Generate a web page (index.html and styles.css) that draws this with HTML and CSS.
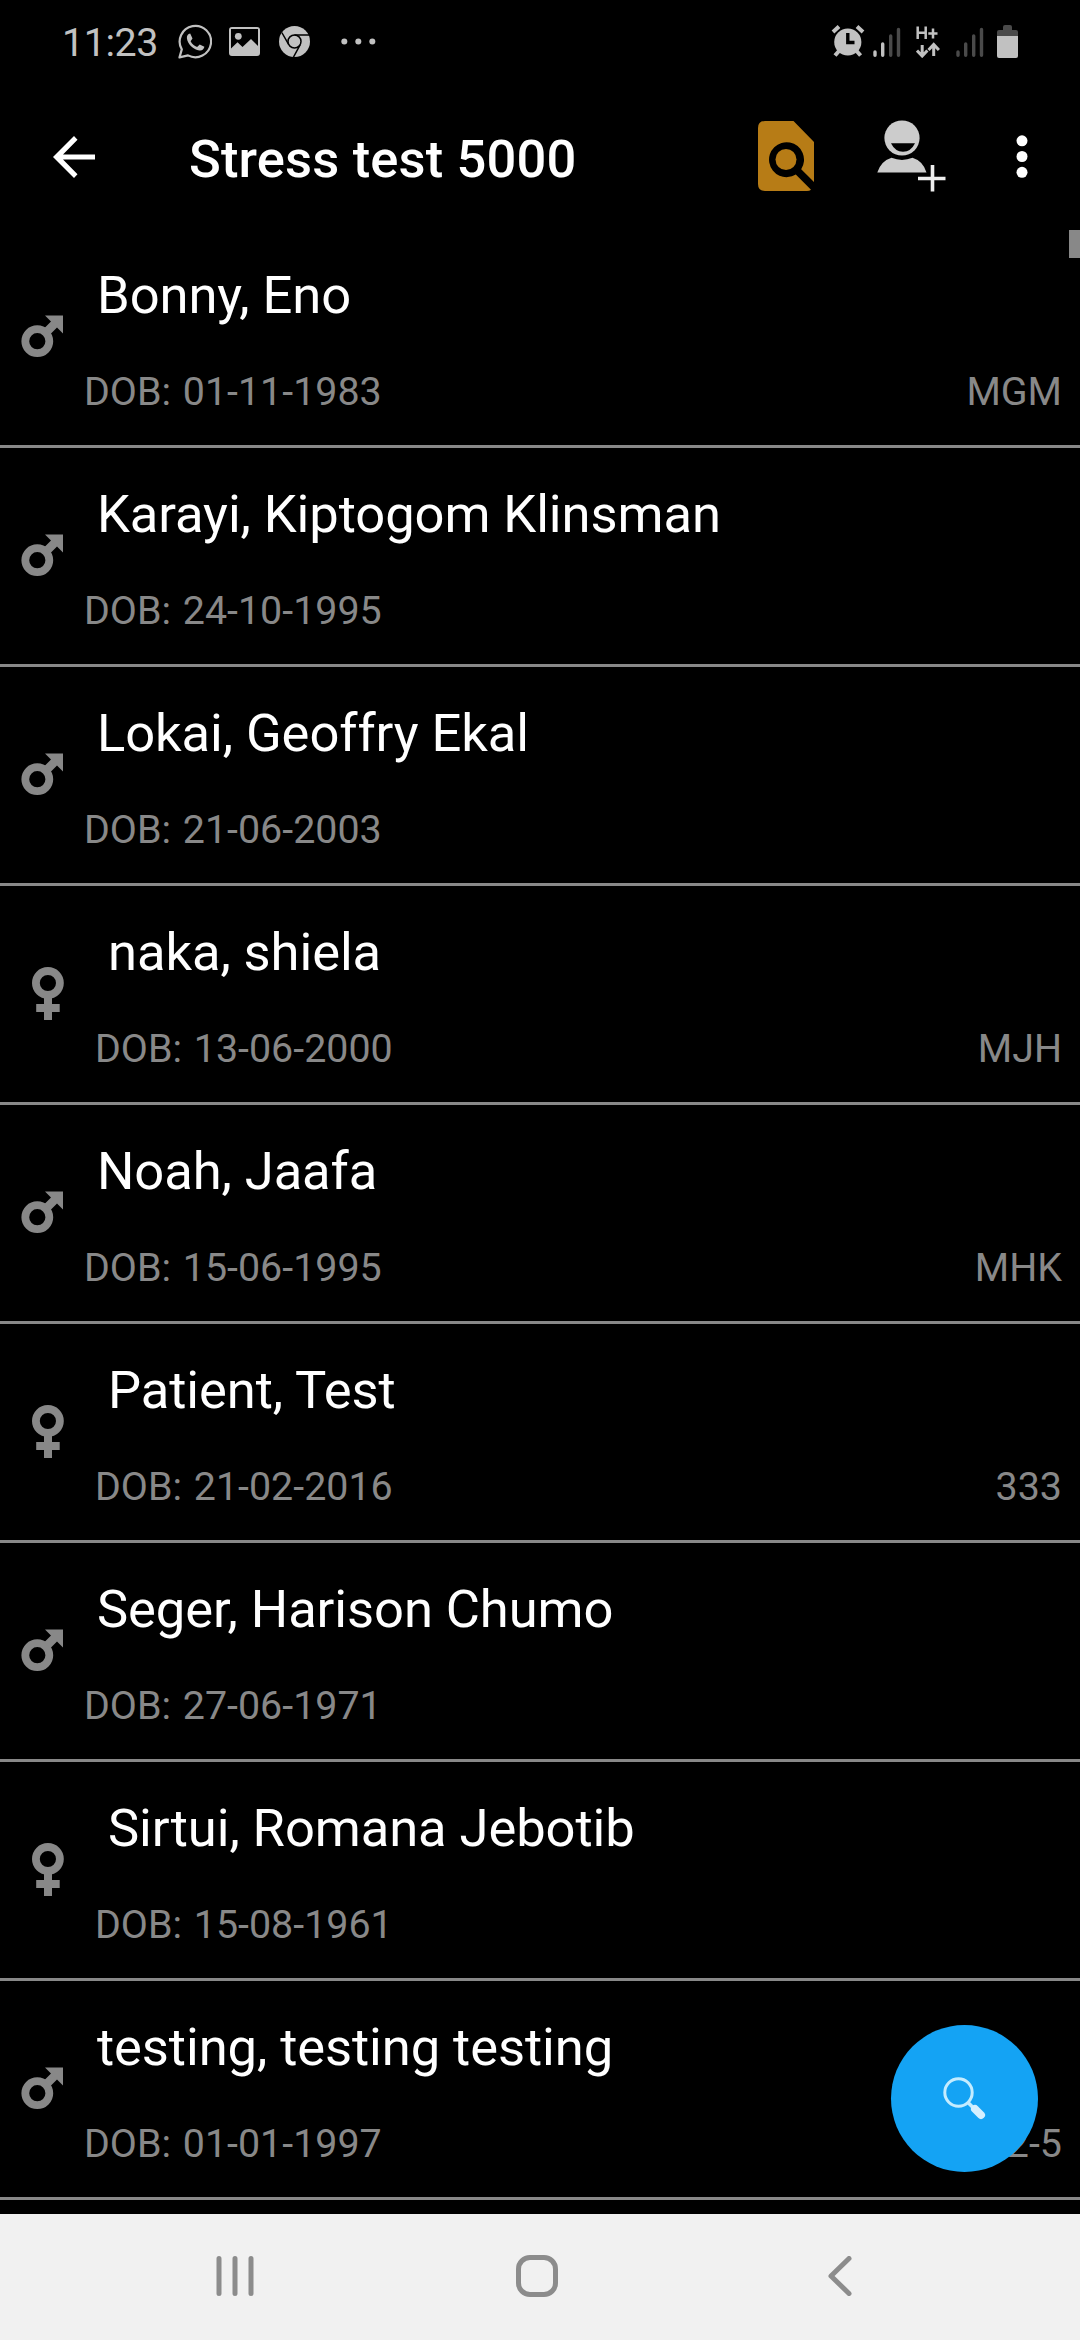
FILE: index.html
```html
<!DOCTYPE html>
<html lang="en">
<head>
<meta charset="utf-8">
<title>Stress test 5000</title>
<link rel="stylesheet" href="styles.css">
</head>
<body>
<svg class="defs" aria-hidden="true">
  <symbol id="male" viewBox="0 0 43 43">
    <circle cx="16.3" cy="26.2" r="12" fill="none" stroke="currentColor" stroke-width="7.8"/>
    <path d="M24 0.5H42V18.5L36 12.5L29 19.5L23 13.5L30 6.5Z" fill="currentColor"/>
  </symbol>
  <symbol id="female" viewBox="0 0 32 53">
    <circle cx="15.9" cy="16" r="12" fill="none" stroke="currentColor" stroke-width="7.8"/>
    <path d="M12 29H20V37H27.7V45H20V53H12V45H4.2V37H12Z" fill="currentColor"/>
  </symbol>
</svg>

<div class="status-bar">
  <span class="clock">11:23</span>
  <svg class="whatsapp" width="34" height="35" viewBox="0 0 34 35">
    <path d="M1.5 33.4L3.8 25.4A15.7 15.7 0 1 1 10 31.4Z" fill="none" stroke="currentColor" stroke-width="2.2" stroke-linejoin="round"/>
    <path d="M12.2 9.4L14.5 14.4L12.6 17.2C14 20 16.3 22 19.1 23L21.7 20.4L26.4 22.8C25.8 25.4 24 26.8 21.4 26.4C15.3 25.5 9.6 20 8.9 14.2C8.7 11.6 10 9.7 12.2 9.4Z" fill="currentColor"/>
  </svg>
  <svg class="picture" width="31" height="29" viewBox="0 0 31 29">
    <path fill-rule="evenodd" d="M3 0H28Q31 0 31 3V26Q31 29 28 29H3Q0 29 0 26V3Q0 0 3 0ZM2 2V21.5L8.5 15.2L13.5 20L22 12L29 19V2Z" fill="currentColor"/>
    <circle cx="9.3" cy="9.3" r="3.4" fill="currentColor"/>
  </svg>
  <svg class="chrome" width="31" height="31" viewBox="0 0 31 31">
    <circle cx="15.5" cy="15.5" r="15.5" fill="currentColor"/>
    <g fill="none" stroke="#000" stroke-width="1.5">
      <circle cx="15.5" cy="15.5" r="6.5"/>
      <path d="M15.5 9H30M9.9 18.8L2.8 6.5M21.1 18.8L14.5 31"/>
    </g>
  </svg>
  <svg class="more-notices" width="35" height="7" viewBox="0 0 35 7" fill="currentColor">
    <circle cx="3.3" cy="3.5" r="3"/><circle cx="17.3" cy="3.5" r="3"/><circle cx="31.3" cy="3.5" r="3"/>
  </svg>
  <svg class="alarm" width="34" height="32" viewBox="0 0 34 32">
    <circle cx="16.8" cy="17" r="13.6" fill="currentColor"/>
    <path d="M2 7L8 1.5M26 1.5L32 7M8 26L4 30.5M25.6 26L29.6 30.5" stroke="currentColor" stroke-width="4" fill="none"/>
    <path d="M16.8 8V17.5H23.5" fill="none" stroke="#000" stroke-width="3.4"/>
  </svg>
  <svg class="signal-a" width="28" height="31" viewBox="0 0 28 31" stroke-width="3.4" stroke-linecap="round">
    <path d="M2 25V28.3M9.7 17V28.3" stroke="#c1c1c1"/><path d="M17.7 9V28.3M25.5 2.5V28.3" stroke="#4a4a4a"/>
  </svg>
  <svg class="hplus" width="24" height="32" viewBox="0 0 24 32" fill="none" stroke="currentColor">
    <path d="M1.7 .5V13M9.7 .5V13M1.7 6.7H9.7M17 2.5V12.5M12.3 7.5H21.5" stroke-width="2.5"/>
    <path d="M6.2 19V30M1 24.5L6.2 30L11.4 24.5M17.7 30V19M12.5 24L17.7 18.5L22.9 24" stroke-width="3"/>
  </svg>
  <svg class="signal-b" width="28" height="31" viewBox="0 0 28 31" stroke="#4a4a4a" stroke-width="3.4" stroke-linecap="round">
    <path d="M2 25V28.3M9.7 17V28.3M17.7 9V28.3M25.5 2.5V28.3"/>
  </svg>
  <svg class="battery" width="21" height="33" viewBox="0 0 21 33">
    <path d="M0 11V7Q0 5 2 5H6V2Q6 0 8 0H13Q15 0 15 2V5H19Q21 5 21 7V11Z" fill="#4a4a4a"/>
    <path d="M0 11H21V31Q21 33 19 33H2Q0 33 0 31Z" fill="currentColor"/>
  </svg>
</div>

<header class="toolbar">
  <svg class="back" width="42" height="42" viewBox="0 0 42 42"><path d="M42 18.4V23.6H10L24.5 38.3L21 42L0 21L21 0L24.5 3.7L10 18.4Z" fill="#fff"/></svg>
  <h1 class="title">Stress test 5000</h1>
  <svg class="find" width="56" height="70" viewBox="0 0 56 70">
    <path d="M7 0H35.5L56 21V61L43.2 48.2A17.5 17.5 0 1 0 37.8 53.5L53 68.7Q51.5 70 49 70H7Q0 70 0 63V7Q0 0 7 0Z" fill="#b77c16"/>
    <circle cx="28" cy="38.5" r="10.5" fill="#b77c16"/>
  </svg>
  <svg class="add-person" width="70" height="72" viewBox="0 0 70 72">
    <circle cx="25" cy="18" r="17.6" fill="#ccc"/>
    <path d="M14 23.3H38Q34 31.7 26 31.7T14 23.3Z" fill="#000"/>
    <path d="M.3 52.5Q4 41 14.5 37.8Q25 42 35.5 37.8Q46 41 49.5 52.5Z" fill="#ccc"/>
    <path d="M55.5 45V71.5M41 58.5H68.5" stroke="#eee" stroke-width="3.6"/>
  </svg>
  <svg class="overflow" width="12" height="43" viewBox="0 0 12 43" fill="#fff">
    <circle cx="6" cy="5.8" r="5.5"/><circle cx="6" cy="21.5" r="5.5"/><circle cx="6" cy="37.3" r="5.5"/>
  </svg>
</header>

<main class="list">
  <article class="row male"><svg class="sex"><use href="#male"/></svg><div class="info"><h2>Bonny, Eno</h2><p><span>DOB: 01-11-1983</span><span>MGM</span></p></div></article>
  <article class="row male"><svg class="sex"><use href="#male"/></svg><div class="info"><h2>Karayi, Kiptogom Klinsman</h2><p><span>DOB: 24-10-1995</span></p></div></article>
  <article class="row male"><svg class="sex"><use href="#male"/></svg><div class="info"><h2>Lokai, Geoffry Ekal</h2><p><span>DOB: 21-06-2003</span></p></div></article>
  <article class="row female"><svg class="sex"><use href="#female"/></svg><div class="info"><h2>naka, shiela</h2><p><span>DOB: 13-06-2000</span><span>MJH</span></p></div></article>
  <article class="row male"><svg class="sex"><use href="#male"/></svg><div class="info"><h2>Noah, Jaafa</h2><p><span>DOB: 15-06-1995</span><span>MHK</span></p></div></article>
  <article class="row female"><svg class="sex"><use href="#female"/></svg><div class="info"><h2>Patient, Test</h2><p><span>DOB: 21-02-2016</span><span>333</span></p></div></article>
  <article class="row male"><svg class="sex"><use href="#male"/></svg><div class="info"><h2>Seger, Harison Chumo</h2><p><span>DOB: 27-06-1971</span></p></div></article>
  <article class="row female"><svg class="sex"><use href="#female"/></svg><div class="info"><h2>Sirtui, Romana Jebotib</h2><p><span>DOB: 15-08-1961</span></p></div></article>
  <article class="row male"><svg class="sex"><use href="#male"/></svg><div class="info"><h2>testing, testing testing</h2><p><span>DOB: 01-01-1997</span><span>2-5</span></p></div></article>
  <div class="scroll-thumb"></div>
  <button class="fab" aria-label="Search">
    <svg width="44" height="44" viewBox="0 0 44 44">
      <circle cx="15.5" cy="15.5" r="13.7" fill="none" stroke="#c4ecff" stroke-width="3"/>
      <path d="M25 25.5L30 30.5" stroke="#c4ecff" stroke-width="3.5"/>
      <path d="M32 32L38 38" stroke="#d5efff" stroke-width="8" stroke-linecap="round"/>
    </svg>
  </button>
</main>

<nav class="nav-bar">
  <svg class="recents" width="38" height="40" viewBox="0 0 38 40"><path d="M3 2.5V37.5M19 2.5V37.5M35 2.5V37.5"/></svg>
  <svg class="home" width="42" height="42" viewBox="0 0 42 42"><rect x="2.5" y="2.5" width="37" height="37" rx="11.5"/></svg>
  <svg class="nav-back" width="24" height="40" viewBox="0 0 24 40"><path d="M21 2.5L3 20L21 37.5"/></svg>
</nav>
</body>
</html>
```
FILE: styles.css
```css
* { box-sizing: border-box; }
body {
  margin: 0;
  width: 1080px;
  height: 2340px;
  display: flex;
  flex-direction: column;
  background: #000;
  color: #fff;
  font-family: Roboto, sans-serif;
  overflow: hidden;
}
svg { display: block; flex: none; }
h1, h2, p { margin: 0; font-weight: 400; }
.defs { display: none; }

.status-bar {
  height: 84px;
  display: flex;
  align-items: flex-start;
  padding-left: 62px;
  color: #c1c1c1;
}
.clock { width: 115px; padding-top: 20px; font-size: 39.4px; line-height: 46px; letter-spacing: -.4px; }
.whatsapp { margin: 24px 0 0 1px; }
.picture { margin: 27px 0 0 17px; }
.chrome { margin: 26px 0 0 19px; }
.more-notices { margin: 38px auto 0 31px; }
.alarm { margin: 25px 8px 0 0; }
.signal-a { margin: 27px 15px 0 0; }
.hplus { margin: 26px 16px 0 0; }
.signal-b { margin: 27px 13px 0 0; }
.battery { margin: 25px 62px 0 0; }

.toolbar { height: 145px; display: flex; align-items: flex-start; padding-left: 53px; }
.back { margin-top: 52px; }
.title { margin: 44px auto 0 94px; font-size: 52.5px; line-height: 62px; font-weight: 500; letter-spacing: .16px; }
.find { margin: 37px 63px 0 0; }
.add-person { margin: 36px 69px 0 0; }
.overflow { margin: 51px 52px 0 0; }

.list { position: relative; flex: 1; overflow: hidden; }
.row {
  height: 219px;
  display: flex;
  border-bottom: 3px solid #888;
}
.sex { color: #888; }
.male .sex { width: 43px; height: 43px; margin: 86px 20px 0 21px; }
.female .sex { width: 32px; height: 53px; margin: 81px 31px 0 32px; }
.info { flex: 1; padding: 35px 18px 0 0; }
.info h2 { padding-left: 13px; font-size: 52.5px; line-height: 62px; letter-spacing: -.08px; }
.info p {
  display: flex;
  justify-content: space-between;
  margin-top: 43px;
  font-size: 39.4px;
  line-height: 46px;
  word-spacing: 2px;
  color: #888;
}
.scroll-thumb { position: absolute; top: 1px; right: 0; width: 11px; height: 28px; background: #888; }
.fab {
  position: absolute;
  right: 42px;
  bottom: 42px;
  width: 147px;
  height: 147px;
  display: flex;
  align-items: center;
  justify-content: center;
  padding: 0;
  border: 0;
  border-radius: 50%;
  background: #14a3f4;
}

.nav-bar {
  height: 126px;
  display: flex;
  align-items: center;
  justify-content: space-between;
  padding: 0 228px 2px 216px;
  background: #f1f1f1;
}
.nav-bar svg { fill: none; stroke: #8c8c8c; stroke-width: 5; stroke-linecap: round; stroke-linejoin: round; }
.nav-bar .home { margin-left: -8px; }
```
